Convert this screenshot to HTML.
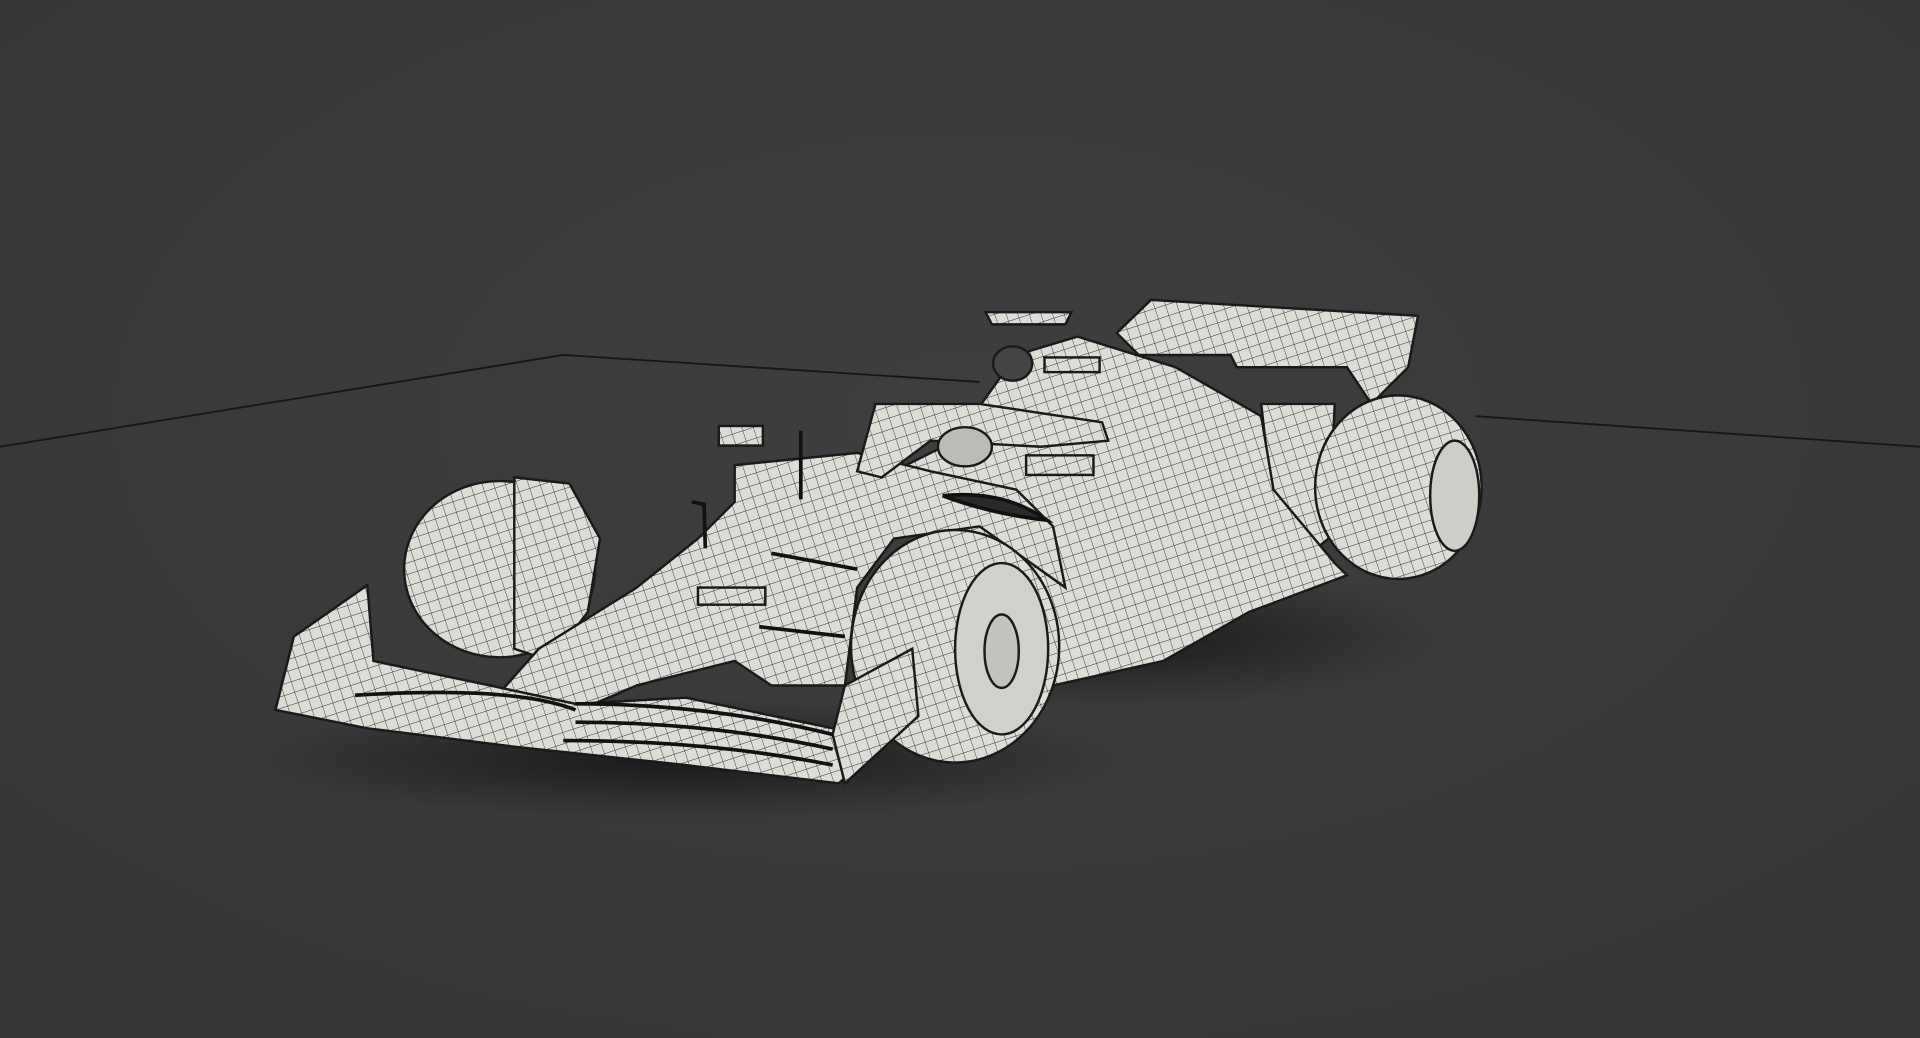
<!DOCTYPE html>
<html><head><meta charset="utf-8"><style>
html,body{margin:0;padding:0;background:#3b3b3b;}
svg{display:block;}
</style></head><body>
<svg width="1920" height="1038" viewBox="0 0 1568 848" preserveAspectRatio="none" xmlns="http://www.w3.org/2000/svg">
<defs>
<radialGradient id="bg" cx="50%" cy="40%" r="75%">
<stop offset="0" stop-color="#3e3e3e"/><stop offset="1" stop-color="#353535"/>
</radialGradient>
<radialGradient id="sh" cx="50%" cy="50%" r="50%">
<stop offset="0" stop-color="#151515" stop-opacity="0.9"/><stop offset="1" stop-color="#1a1a1a" stop-opacity="0"/>
</radialGradient>
<pattern id="mesh" width="9" height="9" patternUnits="userSpaceOnUse" patternTransform="rotate(-18)">
<rect width="9" height="9" fill="#dedcd6"/>
<path d="M0 0H9M0 0V9" stroke="#2a2a2a" stroke-width="0.7"/>
</pattern>
</defs>
<rect width="1568" height="848" fill="url(#bg)"/>
<path d="M0 365 L460 290 L800 312" stroke="#151515" stroke-width="1.5" fill="none"/>
<path d="M1205 340 L1568 365" stroke="#151515" stroke-width="1.5" fill="none"/>
<ellipse cx="560" cy="620" rx="360" ry="50" fill="url(#sh)"/>
<ellipse cx="900" cy="520" rx="280" ry="60" fill="url(#sh)"/>
<g stroke="#1a1a1a" stroke-width="2" fill="url(#mesh)">
<polygon points="912,272 940,245 1158,258 1150,300 1120,330 1100,300 1010,300 1005,290 930,290"/>
<polygon points="1030,330 1090,330 1085,440 1060,460 1040,420"/>
<ellipse cx="1142" cy="398" rx="68" ry="75"/>
<ellipse cx="1188" cy="405" rx="20" ry="45" fill="#cfcdc7"/>
<polygon points="830,290 880,275 960,300 1030,340 1040,400 1090,460 1100,470 1020,500 950,540 860,560 780,470 760,430 720,390 780,360"/>
<ellipse cx="408" cy="465" rx="78" ry="72"/>
<polygon points="420,390 465,395 490,440 480,500 450,540 420,530"/>
<polygon points="600,380 700,370 760,385 830,400 860,430 870,480 800,430 730,440 700,480 690,560 630,560 600,540 520,560 450,590 420,608 395,600 400,575 440,530 520,480 570,440 600,410"/>
<path d="M700 385 L715 330 L800 330 L900 345 L905 360 L850 365 L760 360 L720 390 Z"/>
<polygon points="225,580 240,520 300,478 305,540 400,560 470,575 560,570 680,595 745,530 750,580 685,640 560,625 420,610 300,595"/>
<ellipse cx="780" cy="528" rx="85" ry="95"/>
<ellipse cx="818" cy="530" rx="38" ry="70" fill="#d2d0ca"/>
<ellipse cx="818" cy="532" rx="14" ry="30" fill="#c4c2bc"/>
<polygon points="680,600 690,560 745,530 750,585 690,640"/>
<rect x="587" y="348" width="36" height="16"/>
<rect x="838" y="372" width="55" height="16"/>
<rect x="853" y="292" width="45" height="12"/>
<rect x="570" y="480" width="55" height="14"/>
<path d="M805 255 L875 255 L870 265 L810 265 Z"/>
<ellipse cx="827" cy="297" rx="16" ry="14" fill="#444"/>
<ellipse cx="788" cy="365" rx="22" ry="16" fill="#bdbbb5"/>
</g>
<g stroke="#111" stroke-width="3" fill="none">
<path d="M654 352 L654 408"/>
<path d="M565 410 L575 412 L576 448"/>
<path d="M770 405 Q820 400 855 425 Q810 420 770 405Z" fill="#2a2a2a"/>
<path d="M290 568 Q420 560 470 580"/>
<path d="M470 575 Q580 575 680 600"/>
<path d="M470 590 Q580 590 680 612"/>
<path d="M460 605 Q580 605 680 625"/>
<path d="M620 512 L690 520"/>
<path d="M630 452 L700 465"/>
</g>
</svg>
</body></html>
